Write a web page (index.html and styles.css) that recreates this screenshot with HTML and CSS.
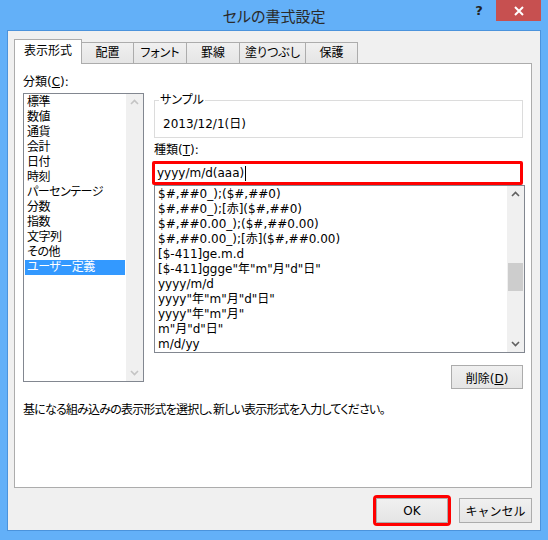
FILE: index.html
```html
<!DOCTYPE html>
<html lang="ja">
<head>
  <meta charset="UTF-8">
  <title>セルの書式設定</title>
  <link rel="stylesheet" href="styles.css">
</head>
<body>

  <div class="window">
    <div class="titlebar">
      <span></span>
      <div class="title">セルの書式設定</div>
      <div class="controls">
        <span class="help">?</span>
        <span class="close">
          <svg width="10" height="10" viewBox="0 0 10 10"><path d="M1 1L9 9M9 1L1 9" stroke="#fff" stroke-width="2"/></svg>
        </span>
      </div>
    </div>

    <div class="client">
      <div class="tabs">
        <div class="tab active">表示形式</div>
        <div class="tab">配置</div>
        <div class="tab">フォント</div>
        <div class="tab">罫線</div>
        <div class="tab">塗りつぶし</div>
        <div class="tab">保護</div>
      </div>

      <div class="panel">
        <div class="panel-body">
          <div class="col-left">
            <div class="label">分類(<u>C</u>):</div>
            <div class="listbox cat">
              <ul class="items">
                <li>標準</li>
                <li>数値</li>
                <li>通貨</li>
                <li>会計</li>
                <li>日付</li>
                <li>時刻</li>
                <li>パーセンテージ</li>
                <li>分数</li>
                <li>指数</li>
                <li>文字列</li>
                <li>その他</li>
                <li class="selected">ユーザー定義</li>
              </ul>
              <div class="scrollbar disabled">
                <svg class="arrow" width="17" height="17" viewBox="0 0 17 17"><path d="M5 10L8.5 6.5L12 10" fill="none" stroke="#c4c4c4" stroke-width="1.6"/></svg>
                <div class="track"></div>
                <svg class="arrow" width="17" height="17" viewBox="0 0 17 17"><path d="M5 7L8.5 10.5L12 7" fill="none" stroke="#c4c4c4" stroke-width="1.6"/></svg>
              </div>
            </div>
          </div>

          <div class="col-right">
            <fieldset class="sample">
              <legend>サンプル</legend>
              <div class="sample-value">2013/12/1(日)</div>
            </fieldset>

            <div class="label kind">種類(<u>T</u>):</div>
            <div class="textbox">yyyy/m/d(aaa)<span class="caret"></span></div>

            <div class="listbox fmt">
              <ul class="items">
                <li>$#,##0_);($#,##0)</li>
                <li>$#,##0_);[赤]($#,##0)</li>
                <li>$#,##0.00_);($#,##0.00)</li>
                <li>$#,##0.00_);[赤]($#,##0.00)</li>
                <li>[$-411]ge.m.d</li>
                <li>[$-411]ggge"年"m"月"d"日"</li>
                <li>yyyy/m/d</li>
                <li>yyyy"年"m"月"d"日"</li>
                <li>yyyy"年"m"月"</li>
                <li>m"月"d"日"</li>
                <li>m/d/yy</li>
              </ul>
              <div class="scrollbar">
                <svg class="arrow" width="17" height="17" viewBox="0 0 17 17"><path d="M5 10L8.5 6.5L12 10" fill="none" stroke="#606060" stroke-width="1.6"/></svg>
                <div class="track"><div class="thumb"></div></div>
                <svg class="arrow" width="17" height="17" viewBox="0 0 17 17"><path d="M5 7L8.5 10.5L12 7" fill="none" stroke="#606060" stroke-width="1.6"/></svg>
              </div>
            </div>

            <div class="actions">
              <button class="btn">削除(<u>D</u>)</button>
            </div>
          </div>
        </div>

        <p class="hint">基になる組み込みの表示形式を選択し、新しい表示形式を入力してください。</p>
      </div>

      <div class="footer">
        <button class="btn ok">OK</button>
        <button class="btn cancel">キャンセル</button>
      </div>
    </div>
  </div>

</body>
</html>
```

FILE: styles.css
```css
body {
  margin: 0;
  font-family: "DejaVu Sans", "Noto Sans CJK JP", sans-serif;
  font-feature-settings: "palt";
  font-size: 12px;
  color: #000;
}

.window {
  width: 548px;
  height: 540px;
  box-sizing: border-box;
  background-color: #63b0f8;
  padding: 0 7px 9px;
  display: flex;
  flex-direction: column;
}

/* title bar */
.titlebar {
  height: 30px;
  flex: none;
  display: grid;
  grid-template-columns: 1fr auto 1fr;
}

.title {
  font-family: "Noto Sans CJK JP", sans-serif;
  font-size: 15px;
  line-height: 32px;
  color: #2a2a2a;
}

.controls {
  justify-self: end;
  display: flex;
  align-items: flex-start;
}

.help {
  font-weight: bold;
  font-size: 13px;
  line-height: 22px;
  color: #222;
  width: 14px;
  text-align: center;
  margin-right: 10px;
}

.close {
  width: 45px;
  height: 21px;
  background-color: #c75050;
  display: flex;
  justify-content: center;
  align-items: center;
}

/* client area */
.client {
  flex: 1;
  border: 1px solid #4b93dc;
  background-color: #f0f0f0;
  display: flex;
  flex-direction: column;
}

.tabs {
  display: flex;
  align-items: flex-end;
  height: 24px;
  margin: 8px 0 0 7px;
}

.tab {
  box-sizing: border-box;
  height: 21px;
  border: 1px solid #acacac;
  border-bottom: none;
  background: linear-gradient(#f0f0f0, #e5e5e5);
  margin-left: -1px;
  text-align: center;
  line-height: 20px;
  width: 54px;
}

.tab:nth-child(2) { width: 53px; }
.tab:nth-child(5) { width: 67px; }
.tab:nth-child(6) { width: 53px; }

.tab.active {
  width: 68px;
  height: 25px;
  background: #fff;
  margin-bottom: -1px;
  position: relative;
  z-index: 1;
  line-height: 22px;
}

.panel {
  flex: 1;
  margin: 0 8px 0 6px;
  border: 1px solid #acacac;
  background-color: #fff;
}

.panel-body {
  display: flex;
  gap: 8px;
  padding: 11px 0 0 8px;
}

.label {
  line-height: 15px;
  margin-bottom: 3px;
}

.col-left {
  width: 121px;
}

.listbox {
  box-sizing: border-box;
  border: 1px solid #828790;
  display: flex;
  background: #fff;
}

.items {
  list-style: none;
  margin: 0;
  padding: 1px;
  flex: 1;
}

.items li {
  line-height: 15px;
  padding: 0 2px;
  white-space: nowrap;
}

.items li.selected {
  background-color: #3399ff;
  color: #fff;
}

.listbox.cat {
  height: 289px;
  letter-spacing: -0.5px;
}

.scrollbar {
  width: 17px;
  background-color: #f0f0f0;
  display: flex;
  flex-direction: column;
}

.arrow {
  display: block;
  flex: none;
}

.track {
  flex: 1;
}

.thumb {
  height: 28px;
  margin: 60px 1px 0;
  background-color: #cdcdcd;
}

.col-right {
  width: 373px;
  padding-top: 18px;
}

.sample {
  box-sizing: border-box;
  width: 369px;
  margin: 0 0 0 2px;
  border: 1px solid #dcdcdc;
  padding: 10px 8px 5px;
}

.sample legend {
  padding: 0 1px;
  margin-left: -4px;
  line-height: 14px;
}

.sample-value {
  line-height: 15px;
}

.label.kind {
  margin: 5px 0 3px 2px;
}

.textbox {
  box-sizing: border-box;
  width: 371px;
  height: 24px;
  border: 3px solid #f00;
  border-radius: 2px;
  padding-left: 2px;
  line-height: 18px;
  display: flex;
  align-items: center;
}

.caret {
  width: 1px;
  height: 15px;
  background: #000;
  margin-left: 1px;
}

.listbox.fmt {
  width: 371px;
  height: 168px;
  margin-left: 2px;
}

.actions {
  display: flex;
  justify-content: flex-end;
  margin: 12px 2px 0 0;
}

.btn {
  box-sizing: border-box;
  font-family: inherit;
  font-size: 12px;
  color: #000;
  height: 24px;
  width: 72px;
  border: 1px solid #acacac;
  border-radius: 0;
  background: linear-gradient(#f0f0f0, #e5e5e5);
  padding: 0;
}

.hint {
  margin: 14px 0 0 8px;
  line-height: 15px;
  letter-spacing: -0.8px;
}

.footer {
  display: flex;
  justify-content: flex-end;
  gap: 11px;
  padding: 10px 8px 7px 0;
}

.footer .btn {
  height: 25px;
}

.btn.ok {
  outline: 3px solid #f00;
  outline-offset: 0;
  border-radius: 1px;
}

.btn.cancel {
  width: 73px;
}
```
